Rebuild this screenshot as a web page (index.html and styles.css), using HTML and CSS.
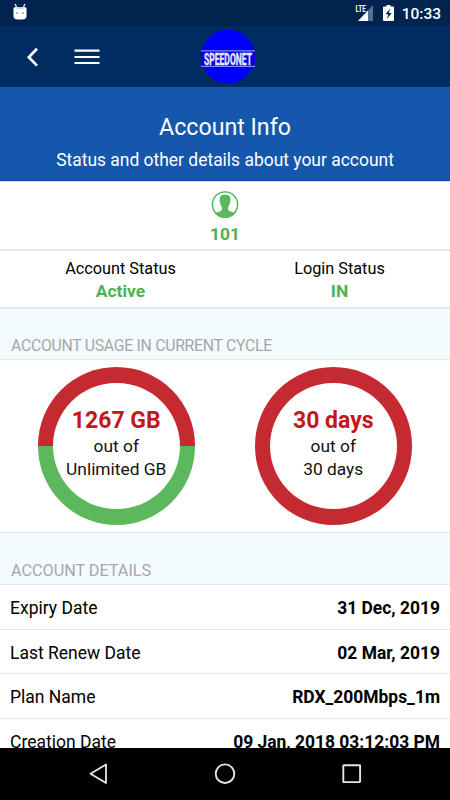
FILE: index.html
```html
<!DOCTYPE html>
<html lang="en">
<head>
<meta charset="utf-8">
<title>Account Info</title>
<link rel="stylesheet" href="styles.css">
</head>
<body>
<div class="phone">
  <div class="statusbar">
    <svg class="droid" width="14" height="17" viewBox="0 0 14 17"><path d="M2.200 1 3.400 4M11.800 1 10.600 4" stroke="#dbe3ee" stroke-width="1.400"/><path d="M.5 5Q1 4 4 4h6Q13 4 13.500 5v8.500Q13 16.500 9.500 16.500h-5Q1 16.500 .5 13.500Z" fill="#fff"/><path d="M2 5Q7 3.200 12 5L11 5.800H3Z" fill="#c3cddb"/><circle cx="4.200" cy="10" r=".8" fill="#53657f"/><circle cx="10" cy="10" r=".8" fill="#53657f"/></svg>
    <div class="status-right">
      <svg width="20" height="17" viewBox="0 0 20 17"><path d="M19 0v16H4Z" fill="#557092"/><path d="M14 5.500V16H4Z" fill="#fff"/><path d="M0 0h11.500v8.500H0Z" fill="#00244e"/><text class="lte" x="1.500" y="7.300" textLength="10.500" lengthAdjust="spacingAndGlyphs">LTE</text></svg>
      <svg class="battery" width="11" height="16" viewBox="0 0 11 16"><path d="M3.500 0h4v1.500H10q1 0 1 1V15q0 1-1 1H1q-1 0-1-1V2.500q0-1 1-1h2.500Z" fill="#fff"/><path d="M7.200 3.500 2.500 9.300h2.700L4 14l4.600-6H5.900Z" fill="#00244e"/></svg>
      <span class="clock">10:33</span>
    </div>
  </div>
  <header class="appbar">
    <svg class="back" width="14" height="20" viewBox="0 0 14 20"><path d="M12 1.800 3.800 10.200l8.200 8.400" fill="none" stroke="#fff" stroke-width="2.700"/></svg>
    <svg class="menu" width="26" height="18" viewBox="0 0 26 18"><path d="M.5 2.600h25M.5 9h25M.5 15h25" stroke="#fff" stroke-width="2.200"/></svg>
    <svg class="logo" width="56" height="57" viewBox="0 0 56 57"><circle cx="28" cy="28.500" r="27" fill="#0000fc"/><path d="M1 22h54v16H1Z" fill="#0000df"/><path d="M1 22.800h54M1 38.300h54" stroke="#8585ff" stroke-width="1.300"/><text class="brand" transform="translate(4 36.600) scale(1 1.500)" textLength="48" lengthAdjust="spacingAndGlyphs">SPEEDONET</text></svg>
  </header>
  <section class="banner">
    <h1>Account Info</h1>
    <p>Status and other details about your account</p>
  </section>
  <section class="user">
    <svg width="28" height="28" viewBox="0 0 28 28"><circle cx="14" cy="13.500" r="12.600" fill="none" stroke="#4cb44f" stroke-width="1.400"/><path transform="translate(0 -.5)" d="M14 4.200c4.500 0 5.700 1.800 5.200 5.400.5 1 .2 2.700-.6 3.500-.2 1.600-.7 2.500-1.500 3.500v2.600c.8 1.800 4 2 7.300 3.300A13.200 13.200 0 0 1 3.700 22.500C7 21.200 10.200 21 10.900 19.200v-2.600c-.8-1-1.300-1.900-1.500-3.500-.8-.8-1.100-2.500-.6-3.500-.5-3.600.7-5.400 5.200-5.400Z" fill="#5cb85c"/></svg>
    <strong>101</strong>
  </section>
  <section class="states">
    <div><span>Account Status</span><strong>Active</strong></div>
    <div><span>Login Status</span><strong>IN</strong></div>
  </section>
  <h2 class="usage-title">ACCOUNT USAGE IN CURRENT CYCLE</h2>
  <section class="usage">
    <div class="ring data"><div class="disc"><strong>1267 GB</strong><span>out of</span><span>Unlimited GB</span></div></div>
    <div class="ring time"><div class="disc"><strong>30 days</strong><span>out of</span><span>30 days</span></div></div>
  </section>
  <h2 class="details-title">ACCOUNT DETAILS</h2>
  <dl class="details">
    <div><dt>Expiry Date</dt><dd>31 Dec, 2019</dd></div>
    <div><dt>Last Renew Date</dt><dd>02 Mar, 2019</dd></div>
    <div><dt>Plan Name</dt><dd>RDX_200Mbps_1m</dd></div>
    <div><dt>Creation Date</dt><dd>09 Jan, 2018 03:12:03 PM</dd></div>
  </dl>
  <nav class="navbar">
    <svg width="20" height="22" viewBox="0 0 20 22"><path d="M18 1.400v18.600L2.500 10.700Z" fill="none" stroke="#e6e6e6" stroke-width="1.800" stroke-linejoin="round"/></svg>
    <svg width="22" height="22" viewBox="0 0 22 22"><circle cx="11" cy="10.700" r="9.300" fill="none" stroke="#e6e6e6" stroke-width="1.900"/></svg>
    <svg width="20" height="22" viewBox="0 0 20 22"><rect x="1.300" y="2.300" width="16.800" height="16.800" rx=".5" fill="none" stroke="#e6e6e6" stroke-width="1.900"/></svg>
  </nav>
</div>
</body>
</html>
```
FILE: styles.css
```css
* { box-sizing: border-box; }
body { margin: 0; font-family: Roboto, "Liberation Sans", sans-serif; color: #000; background: #fff; }
h1, h2, p, dl, dd { margin: 0; font-weight: 400; }
svg { display: block; flex: none; }
.phone { width: 450px; height: 800px; overflow: hidden; display: flex; flex-direction: column; }
.phone > * { flex: none; }
.statusbar { height: 26px; background: #00244e; display: flex; justify-content: space-between; padding: 3px 9px 0 13px; color: #fff; }
.status-right { display: flex; padding-top: 2px; }
.status-right svg { overflow: visible; }
.battery { margin-left: 9px; }
.clock { margin-left: 8px; font-size: 15.5px; line-height: 19px; font-weight: 500; }
.lte { font-size: 9.500px; font-weight: 700; fill: #fff; }
.appbar { height: 61px; background: #002c62; display: flex; align-items: flex-start; }
.back { margin: 21px 0 0 25px; }
.menu { margin: 22px 0 0 35px; }
.logo { margin: 2px 0 0 100px; overflow: visible; }
.brand { font-size: 11px; font-weight: 700; fill: #e8e8ff; stroke: #e8e8ff; stroke-width: .3; }
.banner { height: 94px; background: #1457ad; color: #fff; text-align: center; padding-top: 26px; border-bottom: 1px solid #0645a8; }
.banner h1 { font-size: 23.200px; line-height: 29px; }
.banner p { font-size: 17.450px; line-height: 24px; margin-top: 6px; }
.user { height: 70px; border-bottom: 2px solid #e7e7e7; display: flex; flex-direction: column; align-items: center; padding-top: 9px; border-top: 1px solid #dfe3e9; }
.user strong, .states strong { color: #4cb44f; font-size: 17.400px; line-height: 22px; font-weight: 700; }
.user strong { margin-top: 4px; }
.states { height: 58px; border-bottom: 2px solid #e7eaec; display: flex; padding: 6px 0 0 11px; }
.states div { width: 219px; display: flex; flex-direction: column; align-items: center; }
.states span { font-size: 16.250px; line-height: 23px; }
h2 { background: #f4fbff; color: #a4a7a9; font-size: 15.800px; line-height: 20px; padding: 27px 11px 0; height: 51px; border-bottom: 1px solid #e4e8e9; letter-spacing: -.28px; }
.usage { height: 173px; display: flex; padding: 7px 0 0 37.500px; gap: 59.500px; border-bottom: 1px solid #dfe2e4; }
.ring { width: 157.500px; height: 157.500px; border-radius: 50%; padding: 15.500px; background: #c62a31; }
.data { background: linear-gradient(#c62a31 50%, #5cb85c 50%); }
.disc { width: 126.500px; height: 126.500px; border-radius: 50%; background: #fff; display: flex; flex-direction: column; align-items: center; padding-top: 25px; white-space: nowrap; }
.disc strong { color: #c6161d; font-size: 23px; line-height: 26px; margin-bottom: 1px; }
.disc span { font-size: 17.350px; line-height: 23px; color: #111; }
.details-title { height: 52px; padding-top: 28px; font-size: 16.200px; letter-spacing: 0; }
.details { height: 163px; overflow: hidden; }
.details div { height: 44.600px; display: flex; justify-content: space-between; padding: 0 10px; border-bottom: 1px solid #e4e4e4; font-size: 17.500px; line-height: 46px; }
.details dd { font-weight: 700; font-size: 17.450px; }
.navbar { height: 52px; background: #000; display: flex; justify-content: space-between; padding: 15px 88px 0 88px; }
```
